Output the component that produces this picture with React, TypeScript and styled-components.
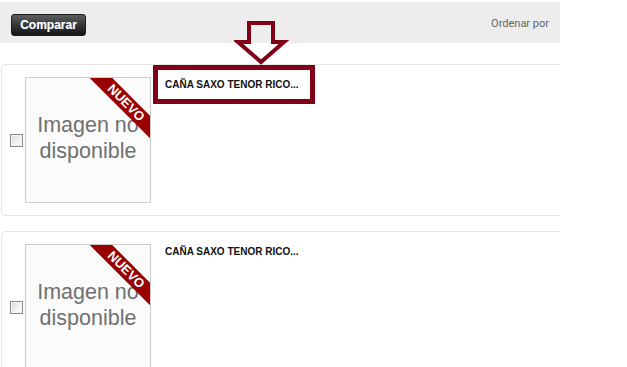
import styled, { createGlobalStyle } from "styled-components";

const GlobalStyle = createGlobalStyle`
    html, body {
        margin: 0;
        padding: 0;
        background: #fff;
        font-family: "Liberation Sans", Arial, sans-serif;
    }
`

const Page = styled.div`
    position: relative;
    width: 560px;
    padding-top: 2px;
    overflow: hidden;
    height: 367px;
`

const Toolbar = styled.div`
    display: flex;
    align-items: center;
    justify-content: space-between;
    height: 41px;
    padding: 0 11px;
    background: #ededed;
`

const CompareButton = styled.button`
    width: 75px;
    height: 22px;
    margin-top: 4px;
    padding: 0;
    border: 1px solid #1a1a1a;
    border-radius: 3px;
    background: linear-gradient(to bottom, #5e5e5e 0%, #3a3a3a 45%, #151515 100%);
    color: #fff;
    font-family: "Liberation Sans", Arial, sans-serif;
    font-weight: bold;
    font-size: 12px;
    text-shadow: 0 0 1px rgba(150, 190, 255, 0.6);
`

const SortLabel = styled.span`
    margin-top: 2px;
    font-family: Roboto, "Liberation Sans", sans-serif;
    font-size: 11px;
    color: #666;
`

const List = styled.ul`
    list-style: none;
    margin: 21px 0 0 1px;
    padding: 0;
`

const Card = styled.li`
    display: grid;
    grid-template-columns: 13px 126px 1fr;
    column-gap: 2px;
    align-items: center;
    width: 600px;
    padding: 12px 8px;
    border: 1px solid #e6e6e6;
    border-radius: 4px;

    &:not(:last-child) {
        margin-bottom: 15px;
    }
`

const Check = styled.input`
    appearance: none;
    width: 13px;
    height: 13px;
    margin: 0;
    border: 1px solid #8a8a8a;
    box-shadow: inset 0 0 0 1px #f4f4f4;
    background: linear-gradient(135deg, #d6d9e2 0%, #f2f3f7 60%, #ffffff 100%);
`

const Thumb = styled.div`
    position: relative;
    box-sizing: border-box;
    width: 126px;
    height: 126px;
    border: 1px solid #cccccc;
    background: #fbfbfb;
    overflow: hidden;
    display: flex;
    flex-direction: column;
    align-items: center;
    justify-content: center;
`

const Placeholder = styled.span`
    font-family: "Liberation Sans", Arial, sans-serif;
    font-size: 21.5px;
    line-height: 26px;
    color: #707070;
    text-align: center;
    margin-bottom: 5px;
`

const Ribbon = styled.span`
    position: absolute;
    left: 50px;
    top: 17px;
    width: 100px;
    height: 16px;
    line-height: 16px;
    transform: rotate(45deg);
    background: #990000;
    color: #fff;
    font-family: "Liberation Sans", Arial, sans-serif;
    font-weight: bold;
    font-size: 13px;
    text-align: center;
`

const Info = styled.div`
    align-self: start;
    padding: 2px 0 0 12px;
`

const Title = styled.h3`
    margin: 0;
    font-family: "Liberation Sans", Arial, sans-serif;
    font-weight: bold;
    font-size: 10px;
    line-height: 12px;
    color: #111;
`

const Highlight = styled.div`
    position: absolute;
    left: 153px;
    top: 65px;
    box-sizing: border-box;
    width: 162px;
    height: 39px;
    border: 5px solid #800018;
`

const Arrow = styled.svg`
    position: absolute;
    left: 234px;
    top: 19px;
`

const products = [
    { id: 1, name: "CAÑA SAXO TENOR RICO..." },
    { id: 2, name: "CAÑA SAXO TENOR RICO..." },
];

export default function App() {
    return <Page>
        <GlobalStyle />
        <Toolbar>
            <CompareButton>Comparar</CompareButton>
            <SortLabel>Ordenar por</SortLabel>
        </Toolbar>
        <List>
            {products.map(p => <Card key={p.id}>
                <Check type="checkbox" />
                <Thumb>
                    <Placeholder>Imagen no<br />disponible</Placeholder>
                    <Ribbon>NUEVO</Ribbon>
                </Thumb>
                <Info>
                    <Title>{p.name}</Title>
                </Info>
            </Card>)}
        </List>
        <Highlight />
        <Arrow width="56" height="48" viewBox="0 0 56 48">
            <polygon points="15,4 39,4 39,23 50,23 27,43 4,23 15,23" fill="none" stroke="#800018" strokeWidth="4" strokeLinejoin="miter" />
        </Arrow>
    </Page>;
}
